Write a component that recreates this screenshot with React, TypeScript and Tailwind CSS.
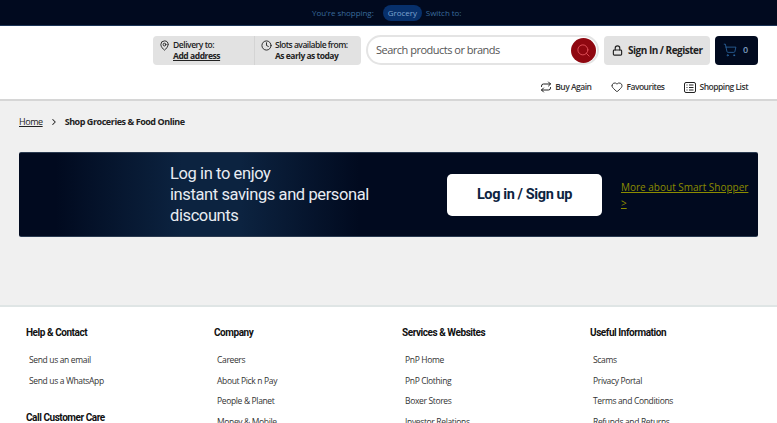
import { Clock, Heart, Lock, MapPin, Repeat, Search, ShoppingCart, ChevronRight } from "lucide-react";

const openSans = "font-['Open_Sans',sans-serif]";

const columns = [
  {
    title: "Help & Contact",
    links: ["Send us an email", "Send us a WhatsApp"],
    extra: "Call Customer Care",
  },
  {
    title: "Company",
    links: ["Careers", "About Pick n Pay", "People & Planet", "Money & Mobile"],
  },
  {
    title: "Services & Websites",
    links: ["PnP Home", "PnP Clothing", "Boxer Stores", "Investor Relations"],
  },
  {
    title: "Useful Information",
    links: ["Scams", "Privacy Portal", "Terms and Conditions", "Refunds and Returns"],
  },
];

const FooterColumn = ({ title, links, extra }: { title: string; links: string[]; extra?: string }) => {
  return (
    <div className="w-[188px] shrink-0">
      <h4 className="font-['Roboto',sans-serif] text-[10px] leading-[14px] font-bold tracking-[-0.45px] text-[#111]">{title}</h4>
      <ul className="mt-[10px] pl-[3px]">
        {links.map((link) => (
          <li key={link} className="h-[20.6px] text-[8.5px] leading-[20px] font-medium tracking-[-0.35px] text-[#333]">
            {link}
          </li>
        ))}
      </ul>
      {extra && (
        <h4 className="mt-[20px] font-['Roboto',sans-serif] text-[10px] leading-[14px] font-bold tracking-[-0.45px] text-[#111]">{extra}</h4>
      )}
    </div>
  );
};

const App = () => {
  return (
    <div className={`flex h-[423px] w-full flex-col overflow-hidden bg-[#f0f0f0] ${openSans}`}>
      <div className="flex h-[26px] shrink-0 items-center border-b border-[#1d3557] bg-[#010a1f] pl-[312px] text-[8px] tracking-[-0.05px]">
        <span className="text-[#3a6a9c]">You're shopping:</span>
        <span className="ml-[9px] rounded-full bg-[#07306b] px-[5px] py-[2px] leading-[12px] text-[#7fa3cf]">Grocery</span>
        <span className="ml-[4px] text-[#3a6a9c]">Switch to:</span>
      </div>

      <header className="shrink-0 border-b-2 border-[#d6d6d6] bg-white">
        <div className="flex h-[48px] items-center pl-[153px]">
          <div className="flex h-[29px] w-[101px] gap-[3px] rounded-l-[4px] bg-[#e2e2e2] pt-[3px] pl-[6px] text-[8.5px] leading-[11px] font-semibold tracking-[-0.45px] text-[#222]">
            <MapPin size={11} strokeWidth={2} className="mt-[1px] shrink-0" />
            <div>
              <p>Delivery to:</p>
              <p className="font-bold underline">Add address</p>
            </div>
          </div>
          <div className="flex h-[29px] w-[107px] gap-[3px] rounded-r-[4px] border-l border-[#d4d4d4] bg-[#e2e2e2] pt-[3px] pl-[6px] text-[8.5px] leading-[11px] font-semibold tracking-[-0.5px] text-[#222]">
            <Clock size={11} strokeWidth={2} className="mt-[1px] shrink-0" />
            <div>
              <p>Slots available from:</p>
              <p className="font-bold">As early as today</p>
            </div>
          </div>
          <div className="ml-[5px] flex h-[30px] w-[233px] items-center justify-between rounded-full border-2 border-[#e4e4e4] pr-[1px] pl-[8px]">
            <span className="text-[11px] tracking-[-0.5px] text-[#555]">Search products or brands</span>
            <span className="flex h-[25px] w-[25px] items-center justify-center rounded-full bg-[#8f0710]">
              <Search size={15} strokeWidth={1.5} className="text-[#e0505a]" />
            </span>
          </div>
          <div className="ml-[5px] flex h-[29px] w-[106px] items-center gap-[5px] rounded-[4px] bg-[#e2e2e2] pl-[8px] text-[10px] font-bold tracking-[-0.5px] whitespace-nowrap text-[#222]">
            <Lock size={11} strokeWidth={2.5} className="shrink-0" />
            <span>Sign In / Register</span>
          </div>
          <div className="ml-[5px] flex h-[29px] w-[43px] items-center gap-[6px] rounded-[4px] bg-[#010a1f] pl-[8px] text-[9px] font-semibold text-[#7e9cc0]">
            <ShoppingCart size={14} strokeWidth={1.3} className="text-[#2f6fae]" />
            <span>0</span>
          </div>
        </div>
        <div className="flex h-[25px] items-start justify-end gap-[20px] pt-[6px] pr-[29px] text-[8.5px] leading-[14px] font-semibold tracking-[-0.5px] text-[#333]">
          <span className="flex items-center gap-[3px]">
            <Repeat size={12} strokeWidth={2} className="text-[#222]" />
            Buy Again
          </span>
          <span className="flex items-center gap-[3px]">
            <Heart size={12} strokeWidth={1.8} className="text-[#222]" />
            Favourites
          </span>
          <span className="flex items-center gap-[3px]">
            <svg width="12" height="11" viewBox="0 0 12 11" fill="none" stroke="#222" strokeWidth="1">
              <rect x="0.5" y="0.5" width="11" height="10" rx="1.5" />
              <path d="M2.5 3h1M5 3h4.5M2.5 5.5h1M5 5.5h4.5M2.5 8h1M5 8h4.5" />
            </svg>
            Shopping List
          </span>
        </div>
      </header>

      <nav className="flex h-[42px] shrink-0 items-center pl-[19px] text-[9px] tracking-[-0.45px] text-[#222]">
        <span className="font-medium underline">Home</span>
        <ChevronRight size={10} strokeWidth={2.5} className="ml-[6px] text-[#222]" />
        <span className="ml-[6px] font-bold">Shop Groceries & Food Online</span>
      </nav>

      <section className="mx-[19px] mt-[9px] flex h-[85px] shrink-0 items-center rounded-[2px] border-y border-[#2a3a50] bg-[linear-gradient(90deg,#010a1f_0%,#010a1f_5%,#0c2340_22%,#0c2340_30%,#010a1f_46%,#010a1f_100%)]">
        <h2 className="ml-[151px] w-[205px] font-['Roboto',sans-serif] text-[16.5px] leading-[21px] font-normal tracking-[-0.4px] text-[#e8ecf2]">
          Log in to enjoy
          <br />
          instant savings and personal discounts
        </h2>
        <div className="ml-[72px] flex h-[42px] w-[155px] items-center justify-center rounded-[5px] bg-white font-['Roboto',sans-serif] text-[14.5px] font-bold tracking-[-0.4px] text-[#0c2340]">
          Log in / Sign up
        </div>
        <a className="ml-[19px] w-[130px] text-[10px] leading-[16px] text-[#8c8c00] underline">
          More about Smart Shopper &gt;
        </a>
      </section>

      <footer className="mt-[68px] flex flex-1 border-t-2 border-[#dfe5e5] bg-white pt-[19px] pl-[26px]">
        {columns.map((col) => (
          <FooterColumn key={col.title} {...col} />
        ))}
      </footer>
    </div>
  );
};

export default App;
